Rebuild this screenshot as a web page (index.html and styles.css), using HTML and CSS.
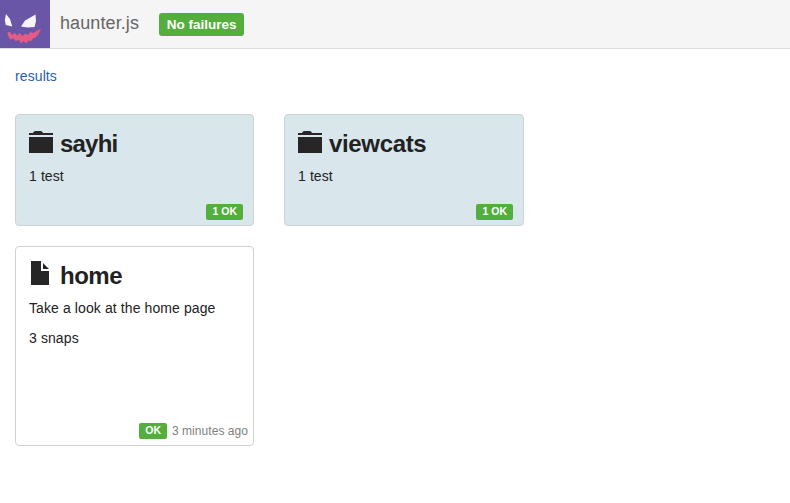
FILE: index.html
```html
<!DOCTYPE html>
<html lang="en">
<head>
<meta charset="utf-8">
<title>haunter.js</title>
<link rel="stylesheet" href="styles.css">
</head>
<body>
<header class="navbar">
  <svg class="logo" viewBox="0 0 50 48" width="50" height="48" aria-hidden="true">
    <path fill="#6956a6" d="M0 0h50v48H0z"/>
    <path fill="#f6f4fa" d="M6 14l4 5 2.300 7.500-6.500-1.500-1-5zM35.500 14.500L36 21l-1.500 6-7 .600-6.500-1.200L25 20.500z"/>
    <path fill="#e45b86" d="M7.500 32l2.500 0 2 3 2.500-2 3 2.500 2-2.500 3 3 2.500-2.500 3 1.500 2.500-3 3 1 3.500-2.500 4-1.500-2.500 5-3 3.500-2 .5-2.500 3.200-2.500-.7-2 3-3-2.500-2.500 2.500-2-3.500-3.500 1-2-2.500-3.500 1L8 35.500z"/>
  </svg>
  <span class="brand">haunter.js</span>
  <span class="label label-status">No failures</span>
</header>
<main class="content">
  <nav class="crumbs"><a class="crumb" href="#">results</a></nav>
  <section class="cards">
    <article class="card folder">
      <h3 class="title title-sayhi"><svg class="icon" viewBox="0 0 24 24" width="24" height="24"><path d="M0 4V2h4c.5-1.300 1.200-2 2.500-2h5c1.300 0 2 .700 2.500 2h10v2zM0 6h24v16H0z"/></svg>sayhi</h3>
      <p class="text">1 test</p>
      <footer class="foot"><span class="label">1 OK</span></footer>
    </article>
    <article class="card folder">
      <h3 class="title title-viewcats"><svg class="icon" viewBox="0 0 24 24" width="24" height="24"><path d="M0 4V2h4c.5-1.300 1.200-2 2.500-2h5c1.300 0 2 .700 2.500 2h10v2zM0 6h24v16H0z"/></svg>viewcats</h3>
      <p class="text">1 test</p>
      <footer class="foot"><span class="label">1 OK</span></footer>
    </article>
    <article class="card test">
      <h3 class="title"><svg class="icon file" viewBox="0 0 24 24" width="24" height="24"><path d="M2 0h10v10h8v14H2zM14 2l6 6h-6z"/></svg>home</h3>
      <p class="text">Take a look at the home page</p>
      <p class="text">3 snaps</p>
      <footer class="foot"><span class="label">OK</span><span class="time">3 minutes ago</span></footer>
    </article>
  </section>
</main>
</body>
</html>
```
FILE: styles.css
```css
* { box-sizing: border-box; }
body {
  margin: 0;
  background: #fff;
  color: #222;
  font: 14px/20px "Liberation Sans", Arial, sans-serif;
}
.navbar {
  display: flex;
  align-items: center;
  height: 49px;
  background: #f5f5f5;
  border-bottom: 1px solid #ddd;
}
.logo { display: block; }
.brand {
  margin: 0 20px 3px 10px;
  color: #666;
  font-size: 18px;
  letter-spacing: .1px;
}
.label {
  height: 16px;
  padding: 0 6px;
  border-radius: 2px;
  background: #54ae3c;
  color: #fff;
  font-size: 10.5px;
  font-weight: bold;
  line-height: 15px;
  text-align: center;
  white-space: nowrap;
}
.label-status {
  width: 85px;
  height: 23px;
  border-radius: 3px;
  padding: 0;
  font-size: 13.5px;
  letter-spacing: 0;
  line-height: 23px;
}
.content { padding: 17px 15px; }
.crumbs { height: 48px; }
.crumb { color: #2a5db0; letter-spacing: .1px; text-decoration: none; }
.cards {
  display: grid;
  grid-template-columns: 239px 240px;
  gap: 20px 30px;
}
.card {
  display: flex;
  flex-direction: column;
  padding: 14px 13px 5px;
  border: 1px solid #d0d3d5;
  border-radius: 4px;
}
.folder { height: 112px; background: #d9e6eb; }
.test { height: 200px; background: #fff; }
.title {
  display: flex;
  align-items: center;
  gap: 7px;
  height: 30px;
  margin: 0 0 7px;
  font-size: 24px;
  letter-spacing: -.5px;
  line-height: 30px;
}
.title-sayhi { letter-spacing: -.8px; }
.title-viewcats { letter-spacing: -.35px; }
.icon { margin-top: -2px; fill: #262626; }
.file { margin-top: -6px; }
.text { margin: 0 0 10px; letter-spacing: .1px; }
.foot {
  display: flex;
  align-items: center;
  justify-content: flex-end;
  gap: 5px;
  height: 16px;
  margin: auto -3px 0 0;
}
.test .foot { margin: auto -8px 1px 0; }
.time { color: #808080; font-size: 12px; letter-spacing: .05px; }
```
